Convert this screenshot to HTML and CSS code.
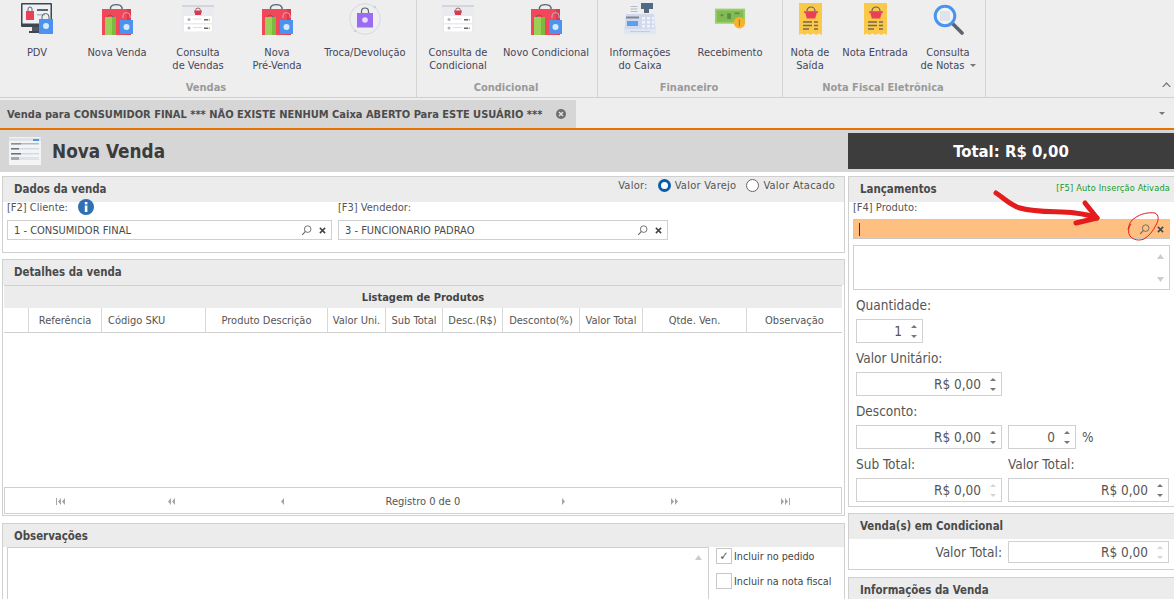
FILE: index.html
```html
<!DOCTYPE html>
<html lang="pt-BR">
<head>
<meta charset="utf-8">
<title>Nova Venda</title>
<link rel="stylesheet" href="styles.css">
</head>
<body>
<svg class="defs" width="0" height="0" aria-hidden="true">
  <symbol id="i-bags" viewBox="0 0 32 32">
    <path d="M9.500 7V4.500a6 4 0 0 1 11.500 0V7" fill="none" stroke="#5a6470" stroke-width="1.400"/>
    <rect x="1" y="6" width="29" height="26" fill="#f2475a"/>
    <rect x="26" y="6" width="4" height="26" fill="#d93a50"/>
    <path d="M6 17v-2a3 3 0 0 1 6 0v2" fill="none" stroke="#5a6470" stroke-width="1"/>
    <rect x="4" y="14" width="11" height="18" fill="#9ad055"/>
    <rect x="11" y="14" width="4" height="18" fill="#7db840"/>
    <path d="M22 15v-2a3.500 3.500 0 0 1 7 0v2" fill="none" stroke="#c9b0b8" stroke-width="1"/>
    <rect x="19" y="17" width="13" height="14" fill="#4a94f0"/>
    <circle cx="25.500" cy="24" r="3" fill="#d9e9fb"/>
  </symbol>
  <symbol id="i-pdv" viewBox="0 0 32 32">
    <rect x="0" y="0" width="31" height="24" rx="1" fill="#3e4652"/>
    <rect x="1.500" y="1.500" width="28" height="19" fill="#eef0f3"/>
    <rect x="11" y="24" width="7" height="5" fill="#4f5763"/>
    <rect x="8" y="28" width="13" height="2" fill="#3e4652"/>
    <rect x="5" y="8" width="8" height="9" fill="#ec3f55"/>
    <path d="M7 8V6a2 2 0 0 1 4 0v2" fill="none" stroke="#5a6470"/>
    <rect x="16" y="6" width="11" height="2" fill="#5a6470"/>
    <rect x="16" y="11" width="8" height="1.500" fill="#b6bcc4"/>
    <path d="M21 16v-2a3.500 3.500 0 0 1 7 0v2" fill="none" stroke="#5a6470"/>
    <rect x="18" y="16" width="14" height="15" fill="#4a94f0"/>
    <circle cx="25" cy="23" r="3" fill="#d9e9fb"/>
  </symbol>
  <symbol id="i-query" viewBox="0 0 32 32">
    <rect x="0" y="2" width="32" height="27" fill="#e9ebef"/>
    <rect x="0" y="2" width="32" height="2" fill="#d3d7dd"/>
    <path d="M12 7.500h8l-1.200 4.500h-5.600z" fill="#d93a50"/>
    <path d="M13.500 7.500a2.500 2.500 0 0 1 5 0" fill="none" stroke="#8a4a55" stroke-width=".8"/>
    <rect x="2" y="13" width="28" height="7" fill="#fff"/>
    <rect x="2" y="21.500" width="28" height="7" fill="#fff"/>
    <circle cx="7" cy="16.500" r="1.500" fill="#aeb3ba"/>
    <circle cx="7" cy="25" r="1.500" fill="#aeb3ba"/>
    <rect x="11" y="15.500" width="9" height="1" fill="#dcdfe3"/>
    <rect x="11" y="24" width="9" height="1" fill="#dcdfe3"/>
    <rect x="22" y="16" width="4" height="1.500" fill="#666"/>
    <rect x="22" y="24.500" width="4" height="1.500" fill="#666"/>
    <rect x="26.500" y="16" width="1.500" height="1.500" fill="#8ecb4e"/>
    <rect x="26.500" y="24.500" width="1.500" height="1.500" fill="#8ecb4e"/>
  </symbol>
  <symbol id="i-swap" viewBox="0 0 32 32">
    <circle cx="16" cy="16" r="15.300" fill="none" stroke="#d5d9e6" stroke-width="1"/>
    <path d="M25 2.500l2.500 1.500-2.500 1.500zM7 26.500l-2.500 1.500 2.500 1.500z" fill="#c5cbdc"/>
    <path d="M12.500 11V8.500a3.500 3.500 0 0 1 7 0V11" fill="none" stroke="#5a6470" stroke-width="1.200"/>
    <rect x="8" y="10" width="16" height="14.500" fill="#9b6bf2"/>
    <circle cx="16" cy="17" r="2.800" fill="#e6dcfb"/>
  </symbol>
  <symbol id="i-till" viewBox="0 0 32 32">
    <rect x="17" y="0" width="12" height="6" fill="#4e6a86"/>
    <rect x="20" y="6" width="5" height="4" fill="#5d6672"/>
    <rect x="5" y="1" width="10" height="11" fill="#eef0f4"/>
    <path d="M6.500 3.500h7M6.500 6h7M6.500 8.500h7" stroke="#b4bac3"/>
    <path d="M2 11h28l2 20H0z" fill="#d0daec"/>
    <rect x="0" y="26" width="32" height="5" fill="#e0e6f3"/>
    <path d="M6 28.500h20" stroke="#c2cde0"/>
    <rect x="3" y="18" width="11" height="5" fill="#5a9ff0"/>
    <path d="M2 13.500h13v2H2z" fill="#7c8694"/>
    <path d="M18 14h3v2.500h-3zM23 14h3v2.500h-3zM28 14h2v2.500h-2zM18 18h3v2.500h-3zM23 18h3v2.500h-3zM28 18h2v2.500h-2zM18 22h3v2.500h-3zM23 22h3v2.500h-3zM28 22h2v2.500h-2z" fill="#f2f4f9"/>
  </symbol>
  <symbol id="i-money" viewBox="0 0 34 32">
    <rect x="1" y="5" width="32" height="16" fill="#98d066"/>
    <rect x="3" y="7" width="28" height="12" fill="#82bb55"/>
    <path d="M7 11h3v2H7zM14 10h4v6h-4zM22 9h5v2h-5z" fill="#5c8f3a"/>
    <circle cx="27" cy="20" r="6" fill="#f7b32e"/>
    <path d="M27 16.500v7" stroke="#b87a10" stroke-width="1.200"/>
  </symbol>
  <symbol id="i-note" viewBox="0 0 32 32">
    <path d="M5 0h23v32l-2.900-1.500-2.900 1.500-2.900-1.500-2.900 1.500-2.900-1.500-2.900 1.500-2.900-1.500L5 32z" fill="#fbc94a"/>
    <path d="M11 9h12l-1.800 6.500h-8.400z" fill="#e9405a"/>
    <path d="M10 9h14" stroke="#e9405a" stroke-width="1.600"/>
    <path d="M13 8a4 4 0 0 1 8 0" fill="none" stroke="#5a6470" stroke-width="1.200"/>
    <path d="M9 19h9M20 19h4M9 22.500h9M20 22.500h4M9 26h6M20 26h4" stroke="#77684a" stroke-width="1.300"/>
  </symbol>
  <symbol id="i-lens" viewBox="0 0 32 32">
    <path d="M21 21l9 9" stroke="#5a6470" stroke-width="3.600" stroke-linecap="round"/>
    <circle cx="13" cy="13" r="9.800" fill="#f1f3f6" stroke="#4a94f0" stroke-width="3"/>
    <rect x="8" y="8" width="10" height="10" fill="#dfe3ea"/>
  </symbol>
  <symbol id="i-find" viewBox="0 0 12 12">
    <circle cx="7.300" cy="4.500" r="3.600" fill="none" stroke="#666" stroke-width="1"/>
    <path d="M4.800 7L1.300 10.700" stroke="#666" stroke-width="1.200"/>
  </symbol>
  <symbol id="i-clear" viewBox="0 0 8 8">
    <path d="M1 1l6 6M7 1L1 7" stroke="#444" stroke-width="1.700"/>
  </symbol>
  <symbol id="n-first" viewBox="0 0 9 7"><path d="M0 0h1v7H0zM5 0v7L2 3.500zM9 0v7L6 3.500z" fill="#a5a5a5"/></symbol>
  <symbol id="n-prev2" viewBox="0 0 9 7"><path d="M4 0v7L1 3.500zM8 0v7L5 3.500z" fill="#a5a5a5"/></symbol>
  <symbol id="n-prev" viewBox="0 0 9 7"><path d="M6 0v7L3 3.500z" fill="#a5a5a5"/></symbol>
  <symbol id="n-next" viewBox="0 0 9 7"><path d="M3 0v7l3-3.500z" fill="#a5a5a5"/></symbol>
  <symbol id="n-next2" viewBox="0 0 9 7"><path d="M1 0v7l3-3.500zM5 0v7l3-3.500z" fill="#a5a5a5"/></symbol>
  <symbol id="n-last" viewBox="0 0 9 7"><path d="M0 0v7l3-3.500zM4 0v7l3-3.500zM8 0h1v7H8z" fill="#a5a5a5"/></symbol>
</svg>

<header class="ribbon">
  <section class="group">
    <div class="items">
      <div class="item w74"><svg class="big"><use href="#i-pdv"/></svg><span>PDV</span></div>
      <div class="item w86"><svg class="big"><use href="#i-bags"/></svg><span>Nova Venda</span></div>
      <div class="item w76"><svg class="big"><use href="#i-query"/></svg><span>Consulta<br>de Vendas</span></div>
      <div class="item w82"><svg class="big"><use href="#i-bags"/></svg><span>Nova<br>Pré-Venda</span></div>
      <div class="item w94"><svg class="big"><use href="#i-swap"/></svg><span>Troca/Devolução</span></div>
    </div>
    <div class="group-label">Vendas</div>
  </section>
  <section class="group">
    <div class="items">
      <div class="item w80"><svg class="big"><use href="#i-query"/></svg><span>Consulta de<br>Condicional</span></div>
      <div class="item w96"><svg class="big"><use href="#i-bags"/></svg><span>Novo Condicional</span></div>
    </div>
    <div class="group-label">Condicional</div>
  </section>
  <section class="group">
    <div class="items">
      <div class="item w82"><svg class="big"><use href="#i-till"/></svg><span>Informações<br>do Caixa</span></div>
      <div class="item w98"><svg class="big"><use href="#i-money"/></svg><span>Recebimento</span></div>
    </div>
    <div class="group-label">Financeiro</div>
  </section>
  <section class="group">
    <div class="items">
      <div class="item w52"><svg class="big"><use href="#i-note"/></svg><span>Nota de<br>Saída</span></div>
      <div class="item w78"><svg class="big"><use href="#i-note"/></svg><span>Nota Entrada</span></div>
      <div class="item w68"><svg class="big"><use href="#i-lens"/></svg><span>Consulta<br>de Notas <i class="caret"></i></span></div>
    </div>
    <div class="group-label">Nota Fiscal Eletrônica</div>
  </section>
  <div class="collapse"><svg width="9" height="5" viewBox="0 0 9 5"><path d="M0 5l4.500-5 4.500 5-1.500 0-3-3-3 3z" fill="#777"/></svg></div>
</header>

<nav class="tabbar">
  <div class="tab">
    <span>Venda para CONSUMIDOR FINAL *** NÃO EXISTE NENHUM Caixa ABERTO Para ESTE USUÁRIO ***</span>
    <svg class="tab-close" width="10" height="10" viewBox="0 0 10 10"><circle cx="5" cy="5" r="5" fill="#6e6e6e"/><path d="M3 3l4 4M7 3l-4 4" stroke="#e4e4e4" stroke-width="1.400"/></svg>
  </div>
  <i class="caret tab-menu"></i>
</nav>

<main class="page">
  <div class="left">
    <div class="title-bar">
      <svg class="title-icon" viewBox="0 0 32 28">
        <rect width="32" height="28" fill="#f3f4f6"/>
        <rect x="0" y="1" width="32" height="3" fill="#dfe3e8"/><rect x="24" y="2" width="6" height="2" fill="#4a94f0"/>
        <rect x="2" y="6" width="28" height="1.500" fill="#b5bac2"/><rect x="2" y="6" width="10" height="1.500" fill="#8a9098"/>
        <rect x="2" y="11" width="28" height="1.500" fill="#d5d9df"/><rect x="2" y="11" width="8" height="1.500" fill="#6d737b"/>
        <rect x="2" y="16" width="28" height="1.500" fill="#d5d9df"/><rect x="2" y="16" width="10" height="1.500" fill="#6d737b"/>
        <rect x="2" y="20" width="28" height="3" fill="#dfe3e8"/><rect x="2" y="20" width="8" height="3" fill="#a5aab2"/>
      </svg>
      <h1>Nova Venda</h1>
    </div>

    <section class="panel data-panel">
      <div class="panel-head">
        <h2>Dados da venda</h2>
        <div class="value-type">
          <span class="vt-label">Valor:</span>
          <i class="radio on"></i><span>Valor Varejo</span>
          <i class="radio"></i><span>Valor Atacado</span>
        </div>
      </div>
      <div class="lookup-row">
        <div class="lookup-col">
          <div class="lookup-label"><span>[F2] Cliente:</span>
            <svg class="info" width="16" height="16" viewBox="0 0 16 16"><circle cx="8" cy="8" r="8" fill="#2e6fb5"/><rect x="6.800" y="6.500" width="2.600" height="6.500" fill="#fff"/><rect x="6.800" y="3" width="2.600" height="2.400" fill="#fff"/></svg>
          </div>
          <div class="field lookup client"><span class="grow">1 - CONSUMIDOR FINAL</span><svg class="find"><use href="#i-find"/></svg><svg class="clear"><use href="#i-clear"/></svg></div>
        </div>
        <div class="lookup-col">
          <div class="lookup-label"><span>[F3] Vendedor:</span></div>
          <div class="field lookup seller"><span class="grow">3 - FUNCIONARIO PADRAO</span><svg class="find"><use href="#i-find"/></svg><svg class="clear"><use href="#i-clear"/></svg></div>
        </div>
      </div>
    </section>

    <section class="panel detail-panel">
      <div class="panel-head"><h2>Detalhes da venda</h2></div>
      <div class="grid-wrap">
        <div class="grid-title">Listagem de Produtos</div>
        <div class="grid-cols">
          <div></div><div>Referência</div><div class="al">Código SKU</div><div>Produto Descrição</div><div>Valor Uni.</div><div>Sub Total</div><div>Desc.(R$)</div><div>Desconto(%)</div><div>Valor Total</div><div>Qtde. Ven.</div><div>Observação</div>
        </div>
        <div class="grid-body"></div>
        <div class="pager">
          <svg class="nav"><use href="#n-first"/></svg><svg class="nav"><use href="#n-prev2"/></svg><svg class="nav"><use href="#n-prev"/></svg>
          <span class="pager-text">Registro 0 de 0</span>
          <svg class="nav"><use href="#n-next"/></svg><svg class="nav"><use href="#n-next2"/></svg><svg class="nav"><use href="#n-last"/></svg>
        </div>
      </div>
    </section>

    <section class="panel obs-panel">
      <div class="panel-head short"><h2>Observações</h2></div>
      <div class="obs-body">
        <div class="obs-text"><svg class="arrow" width="7" height="5" viewBox="0 0 7 5"><path d="M3.500 0L7 5H0z" fill="#ccc"/></svg></div>
        <div class="obs-checks">
          <label class="check"><i class="box">✓</i>Incluir no pedido</label>
          <label class="check"><i class="box"></i>Incluir na nota fiscal</label>
        </div>
      </div>
    </section>
  </div>

  <aside class="right">
    <div class="total">Total: R$ 0,00</div>

    <section class="panel launch-panel">
      <div class="panel-head">
        <h2>Lançamentos</h2>
        <span class="auto">[F5] Auto Inserção Ativada</span>
      </div>
      <div class="launch-body">
        <div class="lookup-label prod">[F4] Produto:</div>
        <div class="field product"><i class="cursor"></i><span class="grow"></span><svg class="find"><use href="#i-find"/></svg><svg class="clear"><use href="#i-clear"/></svg></div>
        <div class="memo">
          <svg width="7" height="5" viewBox="0 0 7 5"><path d="M3.500 0L7 5H0z" fill="#ccc"/></svg>
          <svg width="7" height="5" viewBox="0 0 7 5"><path d="M3.500 5L7 0H0z" fill="#ccc"/></svg>
        </div>
        <div class="lbl">Quantidade:</div>
        <div class="spin qty"><span>1</span><i class="sp"></i></div>
        <div class="lbl">Valor Unitário:</div>
        <div class="spin money"><span>R$ 0,00</span><i class="sp"></i></div>
        <div class="lbl">Desconto:</div>
        <div class="spin-row">
          <div class="spin money"><span>R$ 0,00</span><i class="sp"></i></div>
          <div class="spin pct"><span>0</span><i class="sp"></i></div>
          <span class="pct-sign">%</span>
        </div>
        <div class="two-labels"><div class="lbl col-a">Sub Total:</div><div class="lbl">Valor Total:</div></div>
        <div class="spin-row">
          <div class="spin money dim"><span>R$ 0,00</span><i class="sp"></i></div>
          <div class="spin wide"><span>R$ 0,00</span><i class="sp"></i></div>
        </div>
      </div>
    </section>

    <section class="panel cond-panel">
      <div class="panel-head"><h2>Venda(s) em Condicional</h2></div>
      <div class="cond-body">
        <span class="lbl-inline">Valor Total:</span>
        <div class="spin wide dim"><span>R$ 0,00</span><i class="sp"></i></div>
      </div>
    </section>

    <section class="panel info-panel">
      <div class="panel-head"><h2>Informações da Venda</h2></div>
    </section>
  </aside>
</main>

<svg class="scribble" width="190" height="60" viewBox="0 0 190 60" aria-hidden="true">
  <path d="M6 7C14 12 20 19 30 22 48 27 68 25 85 27 94 28 102 30 107 32" fill="none" stroke="#e41c1c" stroke-width="5" stroke-linecap="round"/>
  <path d="M95 17L107 32 86 37" fill="none" stroke="#e41c1c" stroke-width="5" stroke-linecap="round" stroke-linejoin="round"/>
  <path d="M138 44C139 38 141 34 145 32 150 28 158 26 165 27 169 29 169 34 166 39 163 45 159 50 154 53 149 55 143 54 140 50 138 47 138 42 141 38" fill="none" stroke="#e41c1c" stroke-width="1"/>
</svg>
</body>
</html>
```
FILE: styles.css
```css
* { box-sizing: border-box; }
html, body { margin: 0; height: 100%; overflow: hidden; }
body {
  position: relative;
  width: 1174px;
  height: 599px;
  background: #fff;
  color: #4a4a4a;
  font-family: "DejaVu Sans", "Noto Sans", sans-serif;
  font-stretch: condensed;
  font-size: 11px;
}
.defs { position: absolute; }
h1, h2 { margin: 0; }
i { font-style: normal; display: block; }

/* ribbon */
.ribbon {
  display: flex;
  height: 98px;
  background: #eeeeee;
  border-bottom: 1px solid #cfcfcf;
  position: relative;
}
.group {
  display: flex;
  flex-direction: column;
  border-right: 1px solid #d4d4d4;
  padding-right: 3px;
}
.group:first-child { padding-right: 4px; }
.group + .group { padding-left: 1px; }
.items { display: flex; height: 80px; padding-top: 3px; }
.item { display: flex; flex-direction: column; align-items: center; text-align: center; color: #46465a; line-height: 13px; }
.item .big { width: 32px; height: 32px; flex: none; margin-bottom: 11px; }
.w52 { width: 52px; } .w68 { width: 68px; } .w74 { width: 74px; } .w76 { width: 76px; }
.w78 { width: 78px; } .w80 { width: 80px; } .w82 { width: 82px; } .w86 { width: 86px; }
.w94 { width: 94px; } .w96 { width: 96px; } .w98 { width: 98px; }
.group-label { text-align: center; color: #9a9a9a; font-weight: bold; line-height: 16px; }
.caret { display: inline-block; width: 0; height: 0; border: 3px solid transparent; border-top: 3px solid #777; border-bottom: 0; margin-left: 2px; vertical-align: 2px; }
.collapse { position: absolute; right: 3px; bottom: 10px; line-height: 0; }

/* tabs */
.tabbar {
  display: flex;
  justify-content: space-between;
  align-items: center;
  height: 32px;
  background: #eeeeee;
  border-bottom: 2px solid #e87200;
  padding-right: 9px;
}
.tab {
  display: flex;
  align-items: center;
  gap: 14px;
  width: 576px;
  height: 28px;
  padding-left: 7px;
  background: #d6d6d6;
  font-weight: bold;
  color: #4c4c4c;
  align-self: flex-end;
  white-space: nowrap;
}
.tab-close { flex: none; }
.tab-menu { margin: 0; }

/* layout */
.page { display: flex; height: 469px; overflow: hidden; background: #fff; }
.left { width: 848px; flex: none; display: flex; flex-direction: column; }
.left > * { flex: none; }
.right { width: 326px; flex: none; background: linear-gradient(#d6d6d6 42px, #fff 42px); padding-top: 3px; }

.title-bar { display: flex; align-items: center; gap: 11px; height: 42px; padding: 0 8px 0 9px; background: #d6d6d6; }
.title-icon { width: 32px; height: 28px; }
h1 { font-size: 18.800px; font-weight: bold; color: #3c3c3c; }

.total {
  height: 36px;
  line-height: 38px;
  background: #3d3d3d;
  color: #fff;
  font-size: 16.600px;
  font-weight: bold;
  text-align: center;
}

.panel { border: 1px solid #d0d0d0; background: #fff; }
.panel-head {
  display: flex;
  justify-content: space-between;
  height: 25px;
  padding: 6px 0 0 11px;
  background: #ececec;
}
.panel-head.short { height: 23px; }
h2 { font-size: 11.400px; line-height: 13px; font-weight: bold; color: #4a4a4a; }

.left .panel { margin: 0 3px 0 2px; }
.left .data-panel { margin-top: 4px; height: 77px; }
.left .detail-panel { margin-top: 6px; height: 257px; }
.left .obs-panel { margin-top: 7px; height: 90px; }

.value-type { display: flex; align-items: center; height: 13px; margin-right: 9px; margin-top: -4px; color: #555; letter-spacing: .25px; }
.radio { width: 13px; height: 13px; border-radius: 50%; border: 1px solid #666; margin: 0 4px 0 0; background: #fff; }
.radio.on { border: 3.500px solid #0a5cad; margin-right: 4px; }
.value-type span + .radio { margin-left: 10px; }

.lookup-row { display: flex; gap: 6px; padding: 0 4px; }
.lookup-col { display: flex; flex-direction: column; }
.lookup-label { display: flex; align-items: flex-start; gap: 10px; height: 18px; line-height: 11px; color: #555; }
.info { margin-top: -3px; }
.lookup-label.prod { height: 17px; }
.field { display: flex; align-items: center; height: 20px; border: 1px solid #d0d0d0; background: #fff; padding: 0 5px 0 6px; color: #4a4a4a; }
.lookup.client { width: 325px; }
.lookup.seller { width: 330px; }
.grow { flex: 1; }
.find { width: 11px; height: 11px; margin-right: 7px; }
.clear { width: 7px; height: 7px; }

/* grid */
.grid-wrap { margin: 0 2px 0 1px; border-top: 1px solid #d0d0d0; }
.grid-title { height: 22px; line-height: 24px; text-align: center; font-weight: bold; background: #ececec; color: #444; }
.grid-cols {
  display: grid;
  grid-template-columns: 25px 73px 104px 122px 58px 57px 60px 77px 63px 104px 1fr;
  height: 25px;
  border-bottom: 1px solid #d0d0d0;
}
.grid-cols > div { display: flex; align-items: center; justify-content: center; border-right: 1px solid #d8d8d8; color: #555; }
.grid-cols > div:last-child { border-right: 0; }
.grid-cols > .al { justify-content: flex-start; padding-left: 6px; }
.grid-body { height: 154px; }
.pager {
  display: grid;
  grid-template-columns: 111px 111px 111px 1fr 111px 111px 111px;
  align-items: center;
  justify-items: center;
  height: 27px;
  padding-top: 1px;
  border: 1px solid #d0d0d0;
  color: #555;
}
.nav { width: 9px; height: 7px; }

/* obs */
.obs-body { display: flex; padding-left: 4px; }
.obs-text { width: 702px; height: 70px; border: 1px solid #d0d0d0; border-bottom: 0; display: flex; justify-content: flex-end; padding: 7px 6px 0 0; }
.arrow { display: block; }
.obs-checks { display: flex; flex-direction: column; gap: 9px; padding: 1px 0 0 7px; }
.check { display: flex; align-items: center; gap: 2px; color: #444; font-size: 10.700px; }
.box { width: 16px; height: 16px; border: 1px solid #c8c8c8; line-height: 14px; text-align: center; font-size: 12px; color: #555; }

/* right */
.right .panel { margin-right: -4px; }
.launch-panel { margin-top: 7px; height: 331px; }
.auto { color: #1a9a1f; font-size: 9.200px; margin: -1px 7px 0 0; line-height: 11px; letter-spacing: .15px; }
.launch-body { width: 321px; padding-left: 4px; }
.field.product { height: 20px; background: #ffbf80; border-color: #c8c8c8; padding: 0 5px; margin-bottom: 6px; }
.cursor { width: 1px; height: 13px; background: #0b3c80; }
.memo { display: flex; flex-direction: column; justify-content: space-between; align-items: flex-end; height: 45px; border: 1px solid #d0d0d0; padding: 8px 5px 7px 0; }

.lbl, .lbl-inline, .spin, .pct-sign { font-size: 13.500px; color: #555; }
.lbl { height: 29px; line-height: 30px; padding-left: 3px; }
.spin {
  display: flex;
  align-items: center;
  justify-content: flex-end;
  height: 24px;
  border: 1px solid #d0d0d0;
  background: #fff;
  margin-left: 3px;
  padding-right: 5px;
}
.qty { width: 67px; }
.money { width: 146px; }
.pct { width: 68px; margin-left: 6px; }
.wide { width: 161px; margin-left: 6px; }
.spin-row { display: flex; align-items: flex-start; }
.two-labels { display: flex; }
.col-a { width: 152px; }
.pct-sign { margin-left: 6px; line-height: 24px; }
.sp {
  position: relative;
  width: 6px;
  height: 13px;
  margin-left: 9px;
  flex: none;
}
.sp::before, .sp::after { content: ""; position: absolute; left: 0; width: 0; height: 0; border: 3px solid transparent; }
.sp::before { top: 0; border-top: 0; border-bottom: 3px solid #777; }
.sp::after { bottom: 0; border-bottom: 0; border-top: 3px solid #777; }
.dim .sp::before { border-bottom-color: #d5d5d5; }
.dim .sp::after { border-top-color: #d5d5d5; }

.cond-panel { margin-top: 6px; height: 57px; }
.cond-body { display: flex; justify-content: flex-end; align-items: flex-start; width: 320px; padding-top: 2px; }
.cond-body .spin { height: 22px; }
.lbl-inline { line-height: 22px; }
.info-panel { margin-top: 7px; height: 40px; }

.scribble { position: absolute; left: 990px; top: 186px; }
```
